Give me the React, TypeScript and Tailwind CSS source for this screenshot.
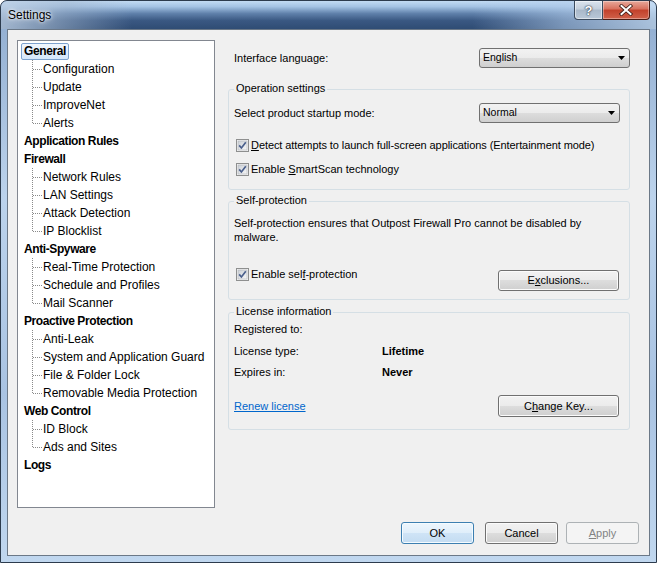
import React from "react";

type Node = { label: string; selected?: boolean; children: string[] };

const tree: Node[] = [
  { label: "General", selected: true, children: ["Configuration", "Update", "ImproveNet", "Alerts"] },
  { label: "Application Rules", children: [] },
  { label: "Firewall", children: ["Network Rules", "LAN Settings", "Attack Detection", "IP Blocklist"] },
  { label: "Anti-Spyware", children: ["Real-Time Protection", "Schedule and Profiles", "Mail Scanner"] },
  {
    label: "Proactive Protection",
    children: ["Anti-Leak", "System and Application Guard", "File & Folder Lock", "Removable Media Protection"],
  },
  { label: "Web Control", children: ["ID Block", "Ads and Sites"] },
  { label: "Logs", children: [] },
];

function Connector({ last }: { last: boolean }) {
  return (
    <svg width="11" height="18" className="shrink-0" shapeRendering="crispEdges">
      <line x1="0.5" y1="0" x2="0.5" y2={last ? 10 : 18} stroke="#8a8a8a" strokeDasharray="1 1" />
      <line x1="1" y1="9.5" x2="10" y2="9.5" stroke="#8a8a8a" strokeDasharray="1 1" />
    </svg>
  );
}

function Tree() {
  return (
    <div className="w-[198px] h-[468px] shrink-0 border border-[#828790] bg-white pt-[1px] text-[12px] text-black">
      {tree.map((n) => (
        <div key={n.label}>
          <div className="h-[18px] flex items-center pl-[3px]">
            <span
              className={
                n.selected
                  ? "h-[17px] flex items-center px-[2px] border border-[#7da2ce] rounded-[2px] bg-[linear-gradient(180deg,#f1f7fe,#d5e7fb)] font-bold tracking-[-0.4px]"
                  : "h-[17px] flex items-center px-[2px] border border-transparent font-bold tracking-[-0.4px]"
              }
            >
              {n.label}
            </span>
          </div>
          {n.children.map((c, i) => (
            <div key={c} className="h-[18px] flex items-center">
              <div className="w-[14px] shrink-0" />
              <Connector last={i === n.children.length - 1} />
              <span className="leading-[18px] whitespace-nowrap">{c}</span>
            </div>
          ))}
        </div>
      ))}
    </div>
  );
}

function Check({ id, children }: { id: string; children: React.ReactNode }) {
  return (
    <div className="h-[18px] flex items-center ml-[2px]">
      <svg width="13" height="13" className="shrink-0">
        <defs>
          <linearGradient id={id} x1="0" y1="0" x2="1" y2="1">
            <stop offset="0" stopColor="#cbd0d6" />
            <stop offset="1" stopColor="#f7f7f7" />
          </linearGradient>
        </defs>
        <rect x="0.5" y="0.5" width="12" height="12" fill="#f4f4f4" stroke="#8e8f8f" />
        <rect x="2" y="2" width="9" height="9" fill={`url(#${id})`} stroke="#aeb3b9" strokeWidth="0.6" />
        <path d="M3.2 6.4 L5.4 9 L9.8 3.2" fill="none" stroke="#4a5f8c" strokeWidth="1.7" />
      </svg>
      <span className="ml-[2px] whitespace-nowrap">{children}</span>
    </div>
  );
}

function Dropdown({ value, width }: { value: string; width: string }) {
  return (
    <div
      className={`${width} h-[20px] flex items-center justify-between pl-[3px] pr-[3px] border border-[#707070] rounded-[3px] bg-[linear-gradient(180deg,#f2f2f2_0%,#ebebeb_50%,#dddddd_50%,#cfcfcf_100%)] text-[10.5px]`}
    >
      <span>{value}</span>
      <svg width="8" height="5">
        <polygon points="0,0 7,0 3.5,4" fill="#000" />
      </svg>
    </div>
  );
}

function Btn({ children, h }: { children: React.ReactNode; h: string }) {
  return (
    <button
      className={`w-[121px] ${h} rounded-[3px] border border-[#707070] bg-[linear-gradient(180deg,#f2f2f2_0%,#ebebeb_50%,#dddddd_50%,#cfcfcf_100%)] shadow-[inset_0_0_0_1px_#fbfbfb] text-[11px] text-black`}
    >
      {children}
    </button>
  );
}

function Group({ title, className, children }: { title: string; className: string; children: React.ReactNode }) {
  return (
    <div className={`relative border border-[#d5dfe5] rounded-[3px] pl-[5px] ${className}`}>
      <span className="absolute left-[5px] top-[-8px] px-[2px] bg-[#f0f0f0] leading-[13px]">{title}</span>
      {children}
    </div>
  );
}

function RightPane() {
  return (
    <div className="w-[402px] ml-[13px] flex flex-col text-[11px] text-black">
      <div className="mt-[8px] h-[20px] flex items-center justify-between pl-[6px]">
        <span>Interface language:</span>
        <Dropdown value="English" width="w-[151px]" />
      </div>

      <Group title="Operation settings" className="mt-[21px] h-[101px] pt-[13px] pr-[9px]">
        <div className="h-[20px] flex items-center justify-between">
          <span>Select product startup mode:</span>
          <Dropdown value="Normal" width="w-[141px]" />
        </div>
        <div className="mt-[13px] tracking-[-0.08px]">
          <Check id="cb1">
            <span className="underline">D</span>etect attempts to launch full-screen applications (Entertainment mode)
          </Check>
        </div>
        <div className="mt-[6px]">
          <Check id="cb2">
            Enable <span className="underline">S</span>martScan technology
          </Check>
        </div>
      </Group>

      <Group title="Self-protection" className="mt-[11px] h-[99px] pt-[14px] pr-[10px]">
        <p className="leading-[14px]">
          Self-protection ensures that Outpost Firewall Pro cannot be disabled by
          <br />
          malware.
        </p>
        <div className="mt-[21px] flex items-start justify-between">
          <Check id="cb3">
            Enable sel<span className="underline">f</span>-protection
          </Check>
          <div className="mt-[5px]">
            <Btn h="h-[21px]">
              E<span className="underline">x</span>clusions...
            </Btn>
          </div>
        </div>
      </Group>

      <Group title="License information" className="mt-[12px] h-[118px] pt-[7px] pr-[10px]">
        <div className="h-[18px] flex items-center">
          <span className="w-[148px]">Registered to:</span>
        </div>
        <div className="mt-[4px] h-[18px] flex items-center">
          <span className="w-[148px]">License type:</span>
          <span className="font-bold">Lifetime</span>
        </div>
        <div className="mt-[3px] h-[18px] flex items-center">
          <span className="w-[148px]">Expires in:</span>
          <span className="font-bold">Never</span>
        </div>
        <div className="mt-[14px] h-[22px] flex items-center justify-between">
          <span className="text-[#0066cc] underline">Renew license</span>
          <Btn h="h-[22px]">
            C<span className="underline">h</span>ange Key...
          </Btn>
        </div>
      </Group>
    </div>
  );
}

function TitleBar() {
  return (
    <div className="h-[28px] shrink-0 flex items-start justify-between rounded-t-[6px] bg-[linear-gradient(90deg,rgba(190,208,228,.8)_0%,rgba(160,180,204,.5)_10%,rgba(255,255,255,0)_20%,rgba(255,255,255,0)_72%,rgba(180,206,236,.55)_86%,rgba(200,222,244,.8)_100%),linear-gradient(180deg,#c2dbf3_0%,#a4c3e4_20%,#5f80aa_45%,#3a5882_70%,#2f4c74_100%)]">
      <span className="pl-[7px] pt-[6px] text-[12px] leading-[16px] text-black [text-shadow:0_0_6px_#fff,0_0_3px_#fff]">
        Settings
      </span>
      <div className="flex mr-[6px]">
        <div className="w-[29px] h-[19px] flex items-center justify-center border border-t-0 border-[#3b4b5e] rounded-bl-[4px] bg-[linear-gradient(180deg,#dbe4ee_0%,#c3cfdc_45%,#a9b8c9_50%,#b9c8d8_100%)] shadow-[inset_0_0_0_1px_rgba(255,255,255,.5)]">
          <span className="text-[13px] font-bold leading-none text-white [text-shadow:0_0_1px_#1c2a3a,0_0_2px_#1c2a3a]">?</span>
        </div>
        <div className="w-[47px] h-[19px] flex items-center justify-center border border-t-0 border-l-0 border-[#4a1d15] rounded-br-[4px] bg-[linear-gradient(180deg,#e8a99b_0%,#d8705d_45%,#c2412b_50%,#d0614a_100%)] shadow-[inset_0_0_0_1px_rgba(255,255,255,.35)]">
          <svg width="14" height="12">
            <path d="M2.5 2 L11.5 10 M11.5 2 L2.5 10" stroke="#3a1a14" strokeWidth="3.6" strokeLinecap="square" />
            <path d="M2.5 2 L11.5 10 M11.5 2 L2.5 10" stroke="#fff" strokeWidth="2" strokeLinecap="square" />
          </svg>
        </div>
      </div>
    </div>
  );
}

export default function App() {
  return (
    <div className="w-[657px] h-[563px] flex flex-col border border-[#2c3b4d] rounded-t-[7px] bg-[linear-gradient(180deg,#8eabcf_0%,#bcd3ec_35%,#a9c3e2_70%,#c0d7ef_100%)] font-['Liberation_Sans',Arial,sans-serif] overflow-hidden">
      <TitleBar />
      <div className="flex-1 mx-[6px] mb-[6px] border border-[#6b7887] bg-[#f0f0f0] flex flex-col">
        <div className="flex pl-[9px] pt-[10px]">
          <Tree />
          <RightPane />
        </div>
        <div className="mt-[14px] flex justify-end pr-[10px] text-[11px]">
          <button className="w-[73px] h-[22px] rounded-[3px] border border-[#3c7fb1] bg-[linear-gradient(180deg,#edf6fd_0%,#dfeefa_50%,#cfe4f6_50%,#c3dcf2_100%)] shadow-[inset_0_0_0_1px_#f4fbff] text-black">
            OK
          </button>
          <button className="ml-[11px] w-[73px] h-[22px] rounded-[3px] border border-[#707070] bg-[linear-gradient(180deg,#f2f2f2_0%,#ebebeb_50%,#dddddd_50%,#cfcfcf_100%)] shadow-[inset_0_0_0_1px_#fbfbfb] text-black">
            Cancel
          </button>
          <button className="ml-[8px] w-[73px] h-[22px] rounded-[3px] border border-[#adb2b5] bg-[#f4f4f4] text-[#838383]">
            <span className="underline">A</span>pply
          </button>
        </div>
      </div>
    </div>
  );
}
